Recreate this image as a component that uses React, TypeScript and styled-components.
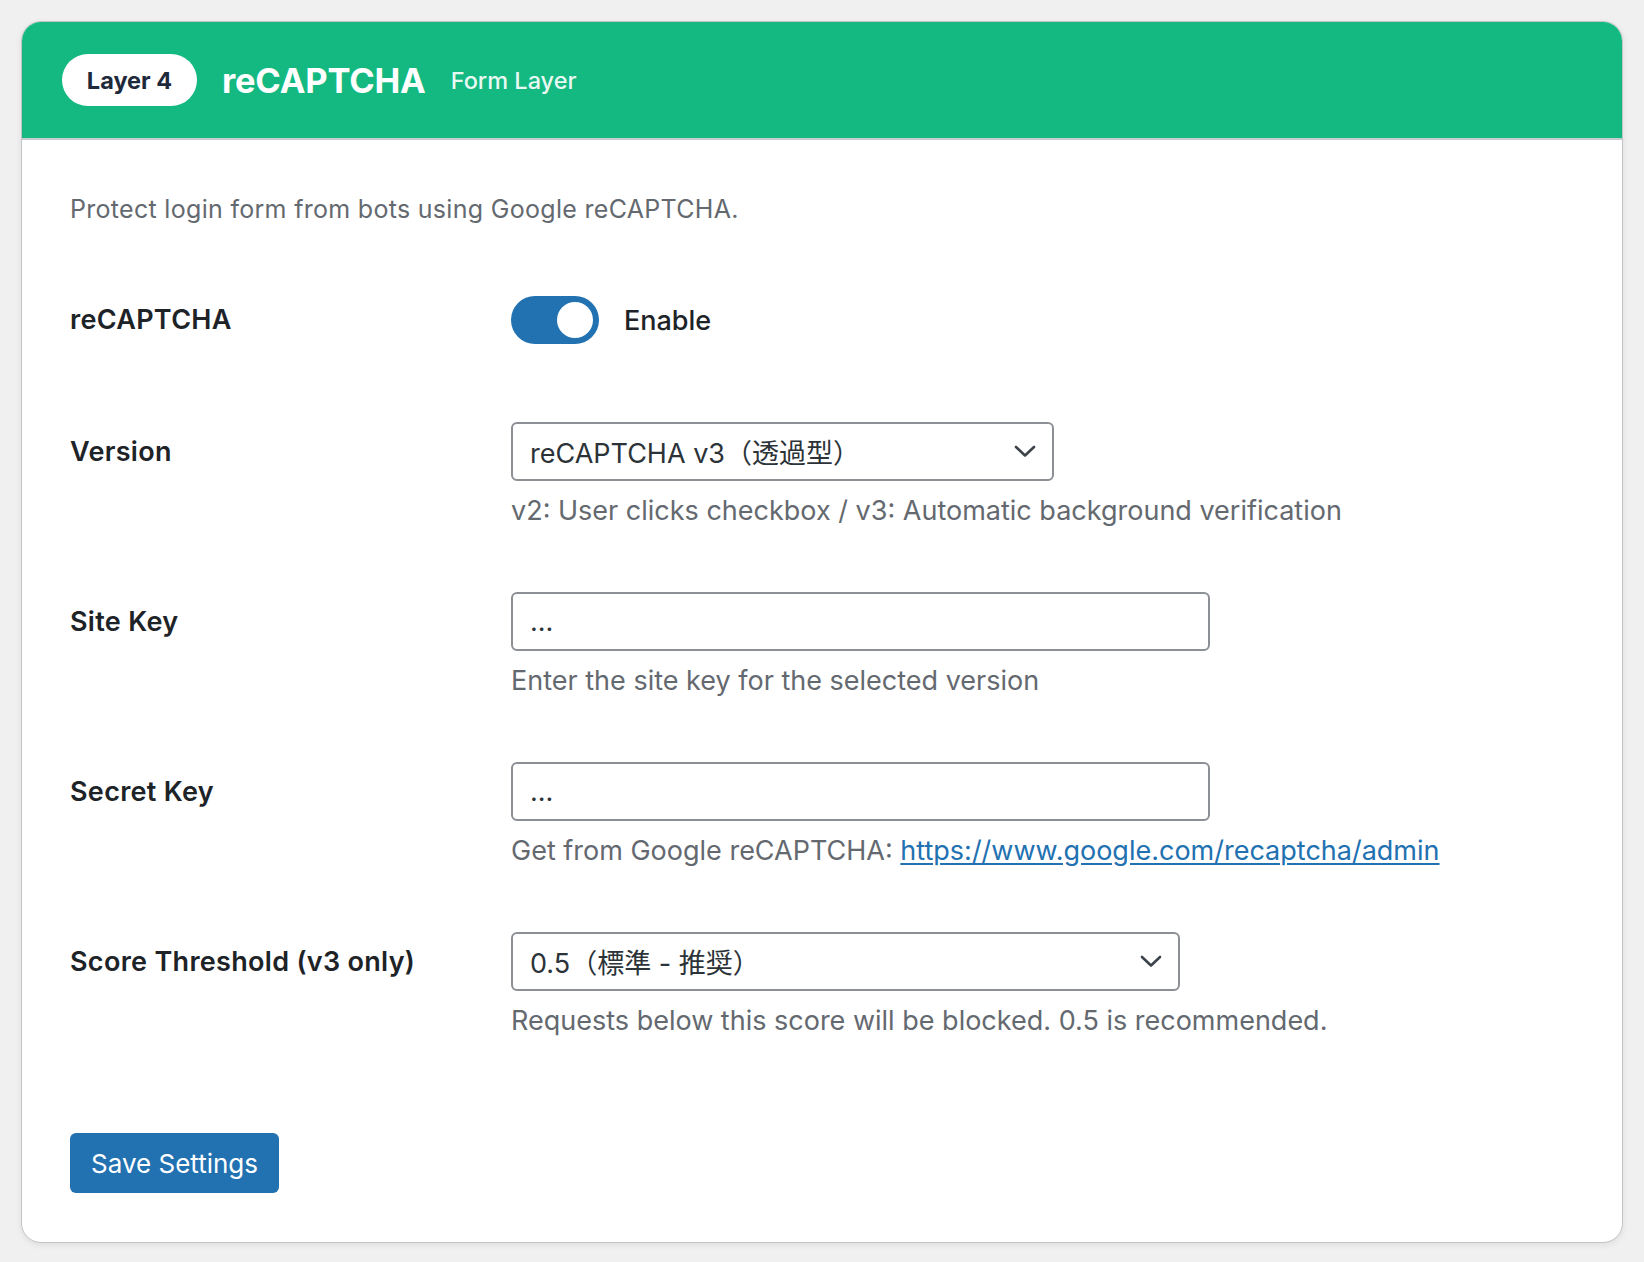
import React from 'react';
import styled, { createGlobalStyle } from 'styled-components';

const GlobalStyle = createGlobalStyle`
  body {
    margin: 0;
    background: #f0f0f1;
    font-family: Inter, "Noto Sans CJK JP", sans-serif;
    -webkit-font-smoothing: antialiased;
  }
`;

type Field = {
  label: string;
  kind: 'select' | 'input';
  value: string;
  width: number;
  help: React.ReactNode;
};

function Chevron() {
  return (
    <svg width="22" height="13" viewBox="0 0 22 13" fill="none">
      <polyline
        points="2,2 11,10.5 20,2"
        stroke="#3c434a"
        strokeWidth="2.6"
        strokeLinecap="round"
        strokeLinejoin="round"
      />
    </svg>
  );
}

export default function App() {
  const fields: Field[] = [
    {
      label: 'Version',
      kind: 'select',
      value: 'reCAPTCHA v3（透過型）',
      width: 543,
      help: 'v2: User clicks checkbox / v3: Automatic background verification',
    },
    {
      label: 'Site Key',
      kind: 'input',
      value: '...',
      width: 699,
      help: 'Enter the site key for the selected version',
    },
    {
      label: 'Secret Key',
      kind: 'input',
      value: '...',
      width: 699,
      help: (
        <>
          Get from Google reCAPTCHA:{' '}
          <HelpLink href="#">https://www.google.com/recaptcha/admin</HelpLink>
        </>
      ),
    },
    {
      label: 'Score Threshold (v3 only)',
      kind: 'select',
      value: '0.5（標準 - 推奨）',
      width: 669,
      help: 'Requests below this score will be blocked. 0.5 is recommended.',
    },
  ];

  return (
    <Page>
      <GlobalStyle />
      <Card>
        <Header>
          <Badge>Layer 4</Badge>
          <Title>reCAPTCHA</Title>
          <Subtitle>Form Layer</Subtitle>
        </Header>
        <Body>
          <Description>Protect login form from bots using Google reCAPTCHA.</Description>
          <Form>
            <SwitchRow>
              <Label $h={48}>reCAPTCHA</Label>
              <SwitchWrap>
                <Toggle>
                  <Knob />
                </Toggle>
                <SwitchText>Enable</SwitchText>
              </SwitchWrap>
            </SwitchRow>
            {fields.map((f) => (
              <Row key={f.label}>
                <Label $h={59}>{f.label}</Label>
                <Control>
                  {f.kind === 'select' ? (
                    <SelectBox $w={f.width}>
                      <span>{f.value}</span>
                      <Chevron />
                    </SelectBox>
                  ) : (
                    <TextInput $w={f.width} defaultValue={f.value} />
                  )}
                  <Help>{f.help}</Help>
                </Control>
              </Row>
            ))}
          </Form>
          <SaveButton type="button">Save Settings</SaveButton>
        </Body>
      </Card>
    </Page>
  );
}

const Page = styled.div`
  padding: 21px;
`;

const Card = styled.div`
  background: #fff;
  border: 1px solid #c3c4c7;
  border-radius: 20px;
  overflow: hidden;
  box-shadow: 0 2px 6px rgba(0, 0, 0, 0.08);
`;

const Header = styled.div`
  height: 116px;
  display: flex;
  align-items: center;
  gap: 25px;
  padding: 0 40px;
  background: #14b982;
  border-bottom: 2px solid #c9ccd0;
`;

const Badge = styled.span`
  display: inline-flex;
  align-items: center;
  justify-content: center;
  width: 135px;
  height: 52px;
  border-radius: 26px;
  background: #fff;
  color: #1e293b;
  font-size: 23.5px;
  font-weight: 700;
`;

const Title = styled.h2`
  margin: 0;
  color: #fff;
  font-size: 34.5px;
  font-weight: 700;
  letter-spacing: -0.2px;
`;

const Subtitle = styled.span`
  color: rgba(255, 255, 255, 0.92);
  font-size: 23.5px;
  font-weight: 500;
`;

const Body = styled.div`
  padding: 51px 48px 49px;
`;

const Description = styled.p`
  margin: 0 0 69px;
  font-size: 25px;
  letter-spacing: 0.3px;
  line-height: 36px;
  color: #646970;
`;

const Form = styled.div`
  display: flex;
  flex-direction: column;
  gap: 63px;
`;

const Row = styled.div`
  display: flex;
  align-items: flex-start;
`;

const SwitchRow = styled(Row)`
  padding-bottom: 15px;
`;

const Label = styled.div<{ $h: number }>`
  width: 441px;
  flex-shrink: 0;
  line-height: ${(p) => p.$h}px;
  font-size: 27px;
  letter-spacing: 0.3px;
  font-weight: 600;
  color: #1d2327;
`;

const SwitchWrap = styled.div`
  display: flex;
  align-items: center;
  gap: 25px;
  height: 48px;
`;

const Toggle = styled.div`
  width: 88px;
  height: 48px;
  box-sizing: border-box;
  padding: 6px;
  border-radius: 24px;
  background: #2271b1;
  display: flex;
  justify-content: flex-end;
  align-items: center;
`;

const Knob = styled.div`
  width: 36px;
  height: 36px;
  border-radius: 50%;
  background: #fff;
`;

const SwitchText = styled.span`
  font-size: 27px;
  font-weight: 500;
  color: #1d2327;
`;

const Control = styled.div`
  display: flex;
  flex-direction: column;
`;

const SelectBox = styled.div<{ $w: number }>`
  width: ${(p) => p.$w}px;
  height: 59px;
  box-sizing: border-box;
  border: 2px solid #8c8f94;
  border-radius: 6px;
  padding: 0 16px 0 17px;
  display: flex;
  align-items: center;
  justify-content: space-between;
  font-size: 27px;
  color: #2c3338;
  background: #fff;
`;

const TextInput = styled.input<{ $w: number }>`
  width: ${(p) => p.$w}px;
  height: 59px;
  box-sizing: border-box;
  border: 2px solid #8c8f94;
  border-radius: 6px;
  padding: 0 17px;
  font-family: inherit;
  font-size: 27px;
  color: #2c3338;
  background: #fff;
  outline: none;
`;

const Help = styled.p`
  margin: 12px 0 0;
  font-size: 27px;
  line-height: 36px;
  color: #646970;
`;

const HelpLink = styled.a`
  color: #2271b1;
  text-decoration: underline;
  text-underline-offset: 3px;
`;

const SaveButton = styled.button`
  margin-top: 94px;
  height: 60px;
  padding: 0 21px;
  border: none;
  border-radius: 6px;
  background: #2271b1;
  color: #fff;
  font-family: inherit;
  font-size: 26px;
  cursor: pointer;
`;
